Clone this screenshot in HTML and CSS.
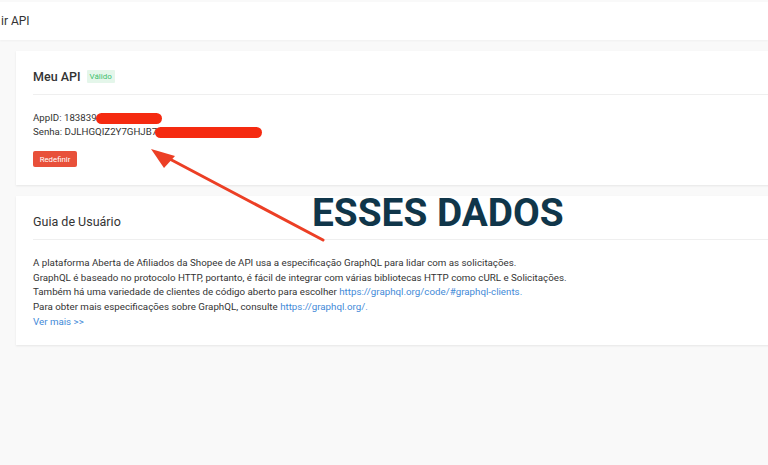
FILE: index.html
```html
<!DOCTYPE html>
<html lang="pt-BR">
<head>
<meta charset="utf-8">
<title>API</title>
<link rel="stylesheet" href="styles.css">
</head>
<body>
<div class="page">
  <header class="topbar"><span class="topbar-title">ir API</span></header>
  <main class="content">
    <section class="card">
      <div class="card-head">
        <h2 class="card-title">Meu API</h2>
        <span class="badge">Válido</span>
      </div>
      <div class="card-body">
        <div class="cred">AppID: 183839<span class="redact redact-id"></span></div>
        <div class="cred">Senha: DJLHGQIZ2Y7GHJB7<span class="redact redact-key"></span></div>
        <button class="btn">Redefinir</button>
      </div>
    </section>
    <section class="card">
      <div class="card-head">
        <h2 class="card-title regular">Guia de Usuário</h2>
      </div>
      <div class="card-body guide">
        <p>A plataforma Aberta de Afiliados da Shopee de API usa a especificação GraphQL para lidar com as solicitações.</p>
        <p>GraphQL é baseado no protocolo HTTP, portanto, é fácil de integrar com várias bibliotecas HTTP como cURL e Solicitações.</p>
        <p>Também há uma variedade de clientes de código aberto para escolher <a href="#">https://graphql.org/code/#graphql-clients.</a></p>
        <p>Para obter mais especificações sobre GraphQL, consulte <a href="#">https://graphql.org/.</a></p>
        <p><a href="#">Ver mais &gt;&gt;</a></p>
      </div>
    </section>
  </main>
  <div class="note">ESSES DADOS</div>
  <svg class="arrow" width="768" height="465" viewBox="0 0 768 465" aria-hidden="true">
    <line x1="323" y1="240" x2="166" y2="157" stroke="#ec3f25" stroke-width="3" stroke-linecap="round"/>
    <polygon points="151,149 175,156 164,168" fill="#ec3f25"/>
  </svg>
</div>
</body>
</html>
```
FILE: styles.css
```css
* { box-sizing: border-box; }
html, body { margin: 0; padding: 0; }
body {
  background: #f9f9f9;
  font-family: Roboto, "Noto Sans", Arial, sans-serif;
  color: #333;
  overflow: hidden;
  width: 768px;
  height: 465px;
}
.page {
  position: relative;
  width: 768px;
  height: 465px;
  overflow: hidden;
  padding-top: 2px;
}
.topbar {
  background: #fff;
  height: 38px;
  display: flex;
  align-items: center;
  padding-left: 1px;
  box-shadow: 0 1px 2px rgba(0,0,0,0.04);
}
.topbar-title {
  font-size: 12px;
  color: #333;
  margin-top: -1px;
}
.content {
  padding: 11px 0 0 16px;
  display: flex;
  flex-direction: column;
  gap: 11px;
}
.card {
  background: #fff;
  width: 800px;
  box-shadow: 0 1px 2px rgba(0,0,0,0.08);
}
.card-head {
  display: flex;
  align-items: center;
  gap: 6px;
  margin: 0 0 0 17px;
  height: 44px;
  padding-top: 7px;
  border-bottom: 1px solid #efefef;
}
.card-title {
  margin: 0;
  font-size: 12.5px;
  font-weight: 500;
  color: #333;
}
.card-title.regular { font-weight: 400; }
.badge {
  font-size: 8px;
  color: #3ebf6e;
  background: #e4f6ea;
  padding: 2px 3px;
  line-height: 9px;
  border-radius: 1px;
}
.card-body {
  padding: 16px 0 18px 17px;
}
.cred {
  font-size: 9.7px;
  line-height: 14px;
  color: #333;
  display: flex;
  align-items: center;
}
.redact {
  display: inline-block;
  height: 11px;
  border-radius: 6px;
  background: #f52a10;
}
.redact-id { width: 66px; margin-left: -1px; }
.redact-key { width: 107px; margin-left: -2px; }
.btn {
  margin-top: 12px;
  display: block;
  width: 44px;
  height: 16px;
  padding: 0;
  border: none;
  border-radius: 2px;
  background: #e8503a;
  color: #fff;
  font-family: inherit;
  font-size: 7.8px;
}
.guide {
  padding-top: 16px;
  padding-bottom: 15.5px;
}
.guide p {
  margin: 0;
  font-size: 9.75px;
  line-height: 14.7px;
  color: #333;
}
.guide a { color: #3f8ad8; text-decoration: none; }
.note {
  position: absolute;
  left: 312px;
  top: 191px;
  font-family: Roboto, "Liberation Sans", Arial, sans-serif;
  font-weight: 700;
  font-size: 38.8px;
  line-height: 44px;
  color: #10364a;
  letter-spacing: 0;
}
.arrow {
  position: absolute;
  left: 0;
  top: 0;
  pointer-events: none;
}
```
